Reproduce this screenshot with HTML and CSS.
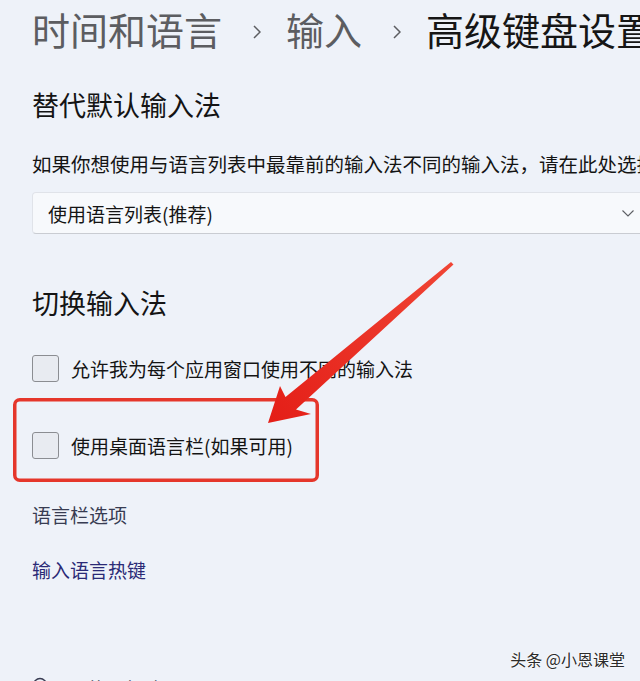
FILE: index.html
```html
<html lang="zh-CN">
  <head>
    <meta charset="utf-8">
    <meta name="viewport" content="width=device-width, initial-scale=1.0">
    <link rel="stylesheet" href="styles.css">
  </head>
  <body>
    <main class="page">
      <nav class="breadcrumb">
        <span class="crumb">时间和语言</span>
        <svg class="crumb-sep" viewBox="0 0 8 14"><path d="M1 1 L7 7 L1 13" /></svg>
        <span class="crumb">输入</span>
        <svg class="crumb-sep" viewBox="0 0 8 14"><path d="M1 1 L7 7 L1 13" /></svg>
        <span class="crumb crumb-current">高级键盘设置</span>
      </nav>

      <h2 class="section-title">替代默认输入法</h2>
      <p class="hint">如果你想使用与语言列表中最靠前的输入法不同的输入法，请在此处选择</p>
      <div class="select">
        <span>使用语言列表(推荐)</span>
        <svg class="select-chevron" viewBox="0 0 12 7"><path d="M0.5 0.5 L6 6 L11.5 0.5" /></svg>
      </div>

      <h2 class="section-title switch-title">切换输入法</h2>
      <label class="check-row"><span class="box"></span>允许我为每个应用窗口使用不同的输入法</label>
      <label class="check-row"><span class="box"></span>使用桌面语言栏(如果可用)</label>

      <a class="link">语言栏选项</a>
      <a class="link hotkey">输入语言热键</a>

      <div class="help-row">
        <svg class="help-icon" viewBox="0 0 16 16"><circle cx="8" cy="8" r="6.5" /></svg>
        <span>获取帮助</span>
      </div>
    </main>

    <svg class="markup" viewBox="0 0 640 681">
      <defs>
        <linearGradient id="arrowFill" x1="452" y1="262" x2="268" y2="423" gradientUnits="userSpaceOnUse">
          <stop offset="0" stop-color="#f04535" />
          <stop offset="1" stop-color="#e41e17" />
        </linearGradient>
      </defs>
      <rect x="14.75" y="399.75" width="302.5" height="80.5" rx="5" fill="none" stroke="#e5362b" stroke-width="3.5" />
      <polygon points="451,262 453.5,264.5 296,409.5 311,414 268,423 280,386 285.5,397" fill="url(#arrowFill)" />
    </svg>

    <div class="watermark">头条 @小恩课堂</div>
  </body>
</html>
```

FILE: styles.css
```css
body {
  margin: 0;
  background-color: #eef2f9;
  color: #141414;
  font-family: "Noto Sans CJK SC", "Noto Sans", sans-serif;
  height: 681px;
  overflow: hidden;
  position: relative;
}

.page {
  padding-left: 32px;
}

.breadcrumb {
  display: flex;
  align-items: center;
  height: 56px;
  font-size: 38px;
  white-space: nowrap;
  color: #5c5d61;
}

.crumb-current {
  color: #161616;
}

.crumb-sep {
  flex: none;
  width: 8px;
  height: 14px;
  margin: 8px 25px 0 31px;
  fill: none;
  stroke: #5c5d61;
  stroke-width: 1.5;
}

.section-title {
  margin: 31px 0 0;
  font-size: 27px;
  font-weight: 400;
  line-height: 36px;
}

.hint {
  margin: 27px 0 0;
  font-size: 19.5px;
  line-height: 28px;
  white-space: nowrap;
}

.select {
  margin-top: 14px;
  width: 620px;
  height: 42px;
  box-sizing: border-box;
  display: flex;
  align-items: center;
  justify-content: space-between;
  padding: 0 17px 0 15px;
  background-color: #f7f9fc;
  border: 1px solid #e0e3e9;
  border-bottom-color: #c9ccd2;
  border-radius: 4px;
  font-size: 19px;
}

.select-chevron {
  width: 12px;
  height: 7px;
  fill: none;
  stroke: #5c5e63;
  stroke-width: 1.1;
}

.switch-title {
  margin-top: 51px;
}

.check-row {
  display: flex;
  align-items: center;
  gap: 12px;
  height: 27px;
  margin-top: 34px;
  font-size: 19px;
}

.check-row + .check-row {
  margin-top: 50px;
}

.box {
  flex: none;
  width: 27px;
  height: 27px;
  box-sizing: border-box;
  border: 1px solid #8b8d92;
  border-radius: 3px;
  background-color: #e8ebf1;
}

.link {
  display: block;
  margin-top: 43px;
  font-size: 19px;
  line-height: 26px;
  color: #383c52;
  text-decoration: none;
}

.hotkey {
  margin-top: 29px;
  color: #2a2a76;
}

.help-row {
  display: flex;
  align-items: flex-start;
  gap: 38px;
  margin-top: 94px;
  font-size: 19px;
  line-height: 24px;
  color: #383c52;
}

.help-icon {
  flex: none;
  width: 16px;
  height: 16px;
  fill: none;
  stroke: #383c52;
  stroke-width: 1.4;
}

.markup {
  position: absolute;
  left: 0;
  top: 0;
  width: 640px;
  height: 681px;
  pointer-events: none;
}

.watermark {
  position: absolute;
  right: 15px;
  top: 648px;
  font-size: 16px;
  line-height: 22px;
  color: #2b2b2b;
  text-shadow: 0 0 2px #fff, 0 0 2px #fff;
}
```
